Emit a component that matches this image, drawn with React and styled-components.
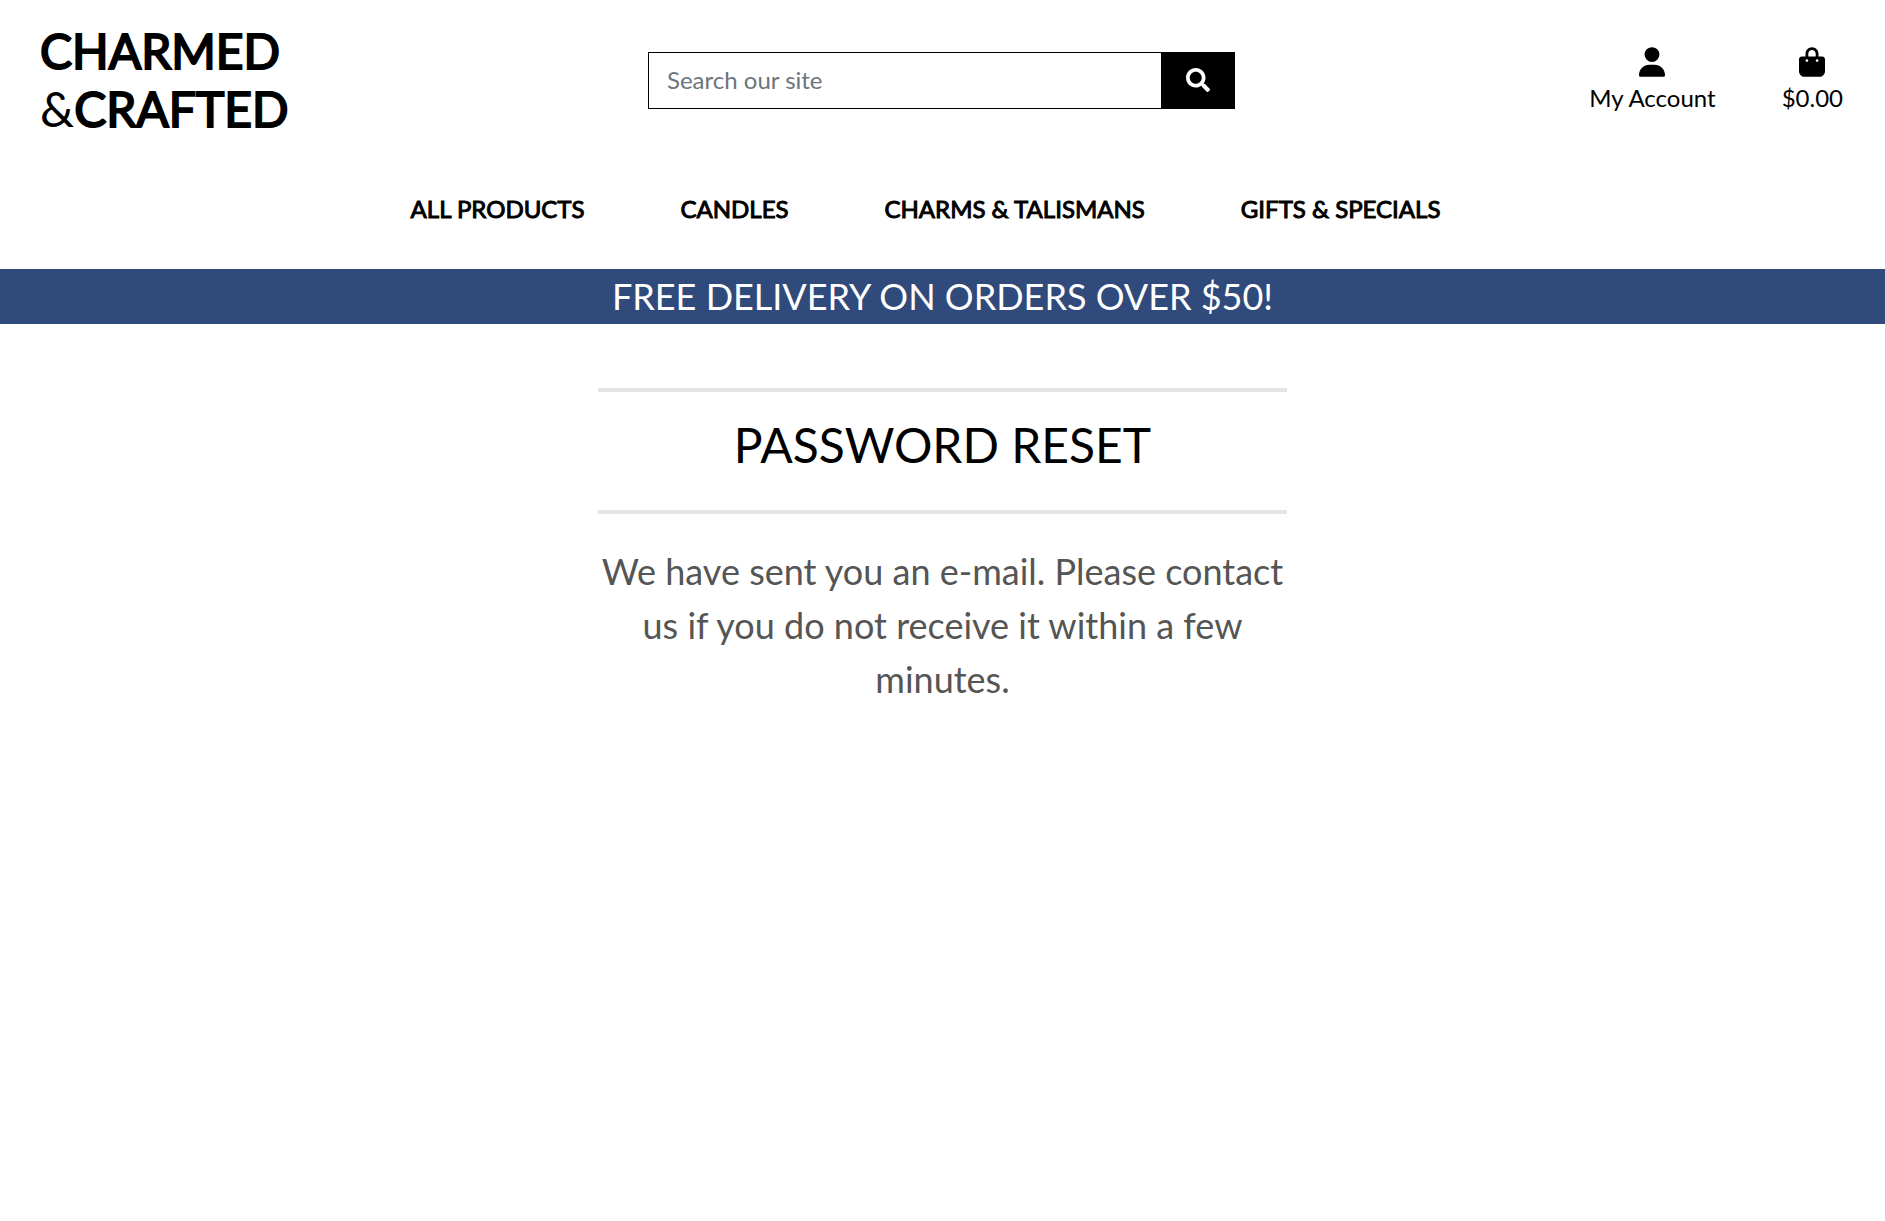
import React from "react";
import styled, { createGlobalStyle } from "styled-components";
import { FaUser, FaBagShopping } from "react-icons/fa6";
import { FaSearch } from "react-icons/fa";

const GlobalStyle = createGlobalStyle`
  *, *::before, *::after { box-sizing: border-box; }
  body {
    margin: 0;
    background: #fff;
    color: #000;
    font: 400 24px/36px Lato, "Liberation Sans", sans-serif;
  }
  a { color: inherit; text-decoration: none; }
`;

const Header = styled.header`
  display: grid;
  grid-template-columns: 1fr 1fr 1fr;
  align-items: center;
  padding: 22px 42px 22px 40px;
`;

const Logo = styled.a`
  justify-self: start;
  font-size: 48px;
  line-height: 58px;
`;

const LogoWord = styled.span`
  -webkit-text-stroke: 2px #000;
`;

const SearchForm = styled.form`
  display: flex;
  width: 100%;
  max-width: 587px;
  height: 57px;
  justify-self: center;
`;

const SearchInput = styled.input`
  flex: 1;
  min-width: 0;
  padding: 0 18px;
  border: 1px solid #000;
  border-right: 0;
  border-radius: 0;
  font: inherit;
  &::placeholder { color: #6c757d; opacity: 1; }
`;

const SearchButton = styled.button`
  display: grid;
  place-items: center;
  width: 74px;
  padding: 0;
  border: 0;
  background: #000;
  color: #fff;
  font-size: 24px;
`;

const Actions = styled.div`
  display: flex;
  justify-content: flex-end;
  gap: 66px;
  padding-top: 3px;
`;

const Action = styled.a`
  display: flex;
  flex-direction: column;
  align-items: center;
  svg { display: block; width: 26px; height: 30px; margin-bottom: 3px; }
`;

const Nav = styled.nav`
  display: flex;
  justify-content: center;
  gap: 96px;
  padding: 31px 34px 42px 0;
`;

const NavLink = styled.a`
  -webkit-text-stroke: 1px #000;
`;

const Banner = styled.div`
  padding: 0 16px;
  background: #2f4a7b;
  color: #fff;
  font-size: 36px;
  line-height: 55px;
  text-align: center;
`;

const Main = styled.main`
  max-width: 689px;
  margin: 64px auto 0;
  text-align: center;
`;

const Rule = styled.hr`
  height: 4px;
  margin: 0;
  border: 0;
  background: #e5e5e5;
`;

const Title = styled.h1`
  margin: 0;
  padding: 24px 0 36px;
  font-size: 48px;
  font-weight: 400;
  line-height: 58px;
`;

const Message = styled.p`
  margin: 30px 0 0;
  color: #555;
  font-size: 36px;
  line-height: 54px;
`;

const links = ["ALL PRODUCTS", "CANDLES", "CHARMS & TALISMANS", "GIFTS & SPECIALS"];

export default function App() {
  return (
    <>
      <GlobalStyle />
      <Header>
        <Logo href="#">
          <LogoWord>CHARMED</LogoWord>
          <br />
          &amp;<LogoWord>CRAFTED</LogoWord>
        </Logo>
        <SearchForm role="search">
          <SearchInput type="text" placeholder="Search our site" aria-label="Search our site" />
          <SearchButton type="submit" aria-label="Search">
            <FaSearch />
          </SearchButton>
        </SearchForm>
        <Actions>
          <Action href="#">
            <FaUser />
            My Account
          </Action>
          <Action href="#">
            <FaBagShopping />
            $0.00
          </Action>
        </Actions>
      </Header>
      <Nav>
        {links.map((label) => (
          <NavLink href="#" key={label}>{label}</NavLink>
        ))}
      </Nav>
      <Banner>FREE DELIVERY ON ORDERS OVER $50!</Banner>
      <Main>
        <Rule />
        <Title>PASSWORD RESET</Title>
        <Rule />
        <Message>
          We have sent you an e-mail. Please contact us if you do not receive it within a few minutes.
        </Message>
      </Main>
    </>
  );
}
